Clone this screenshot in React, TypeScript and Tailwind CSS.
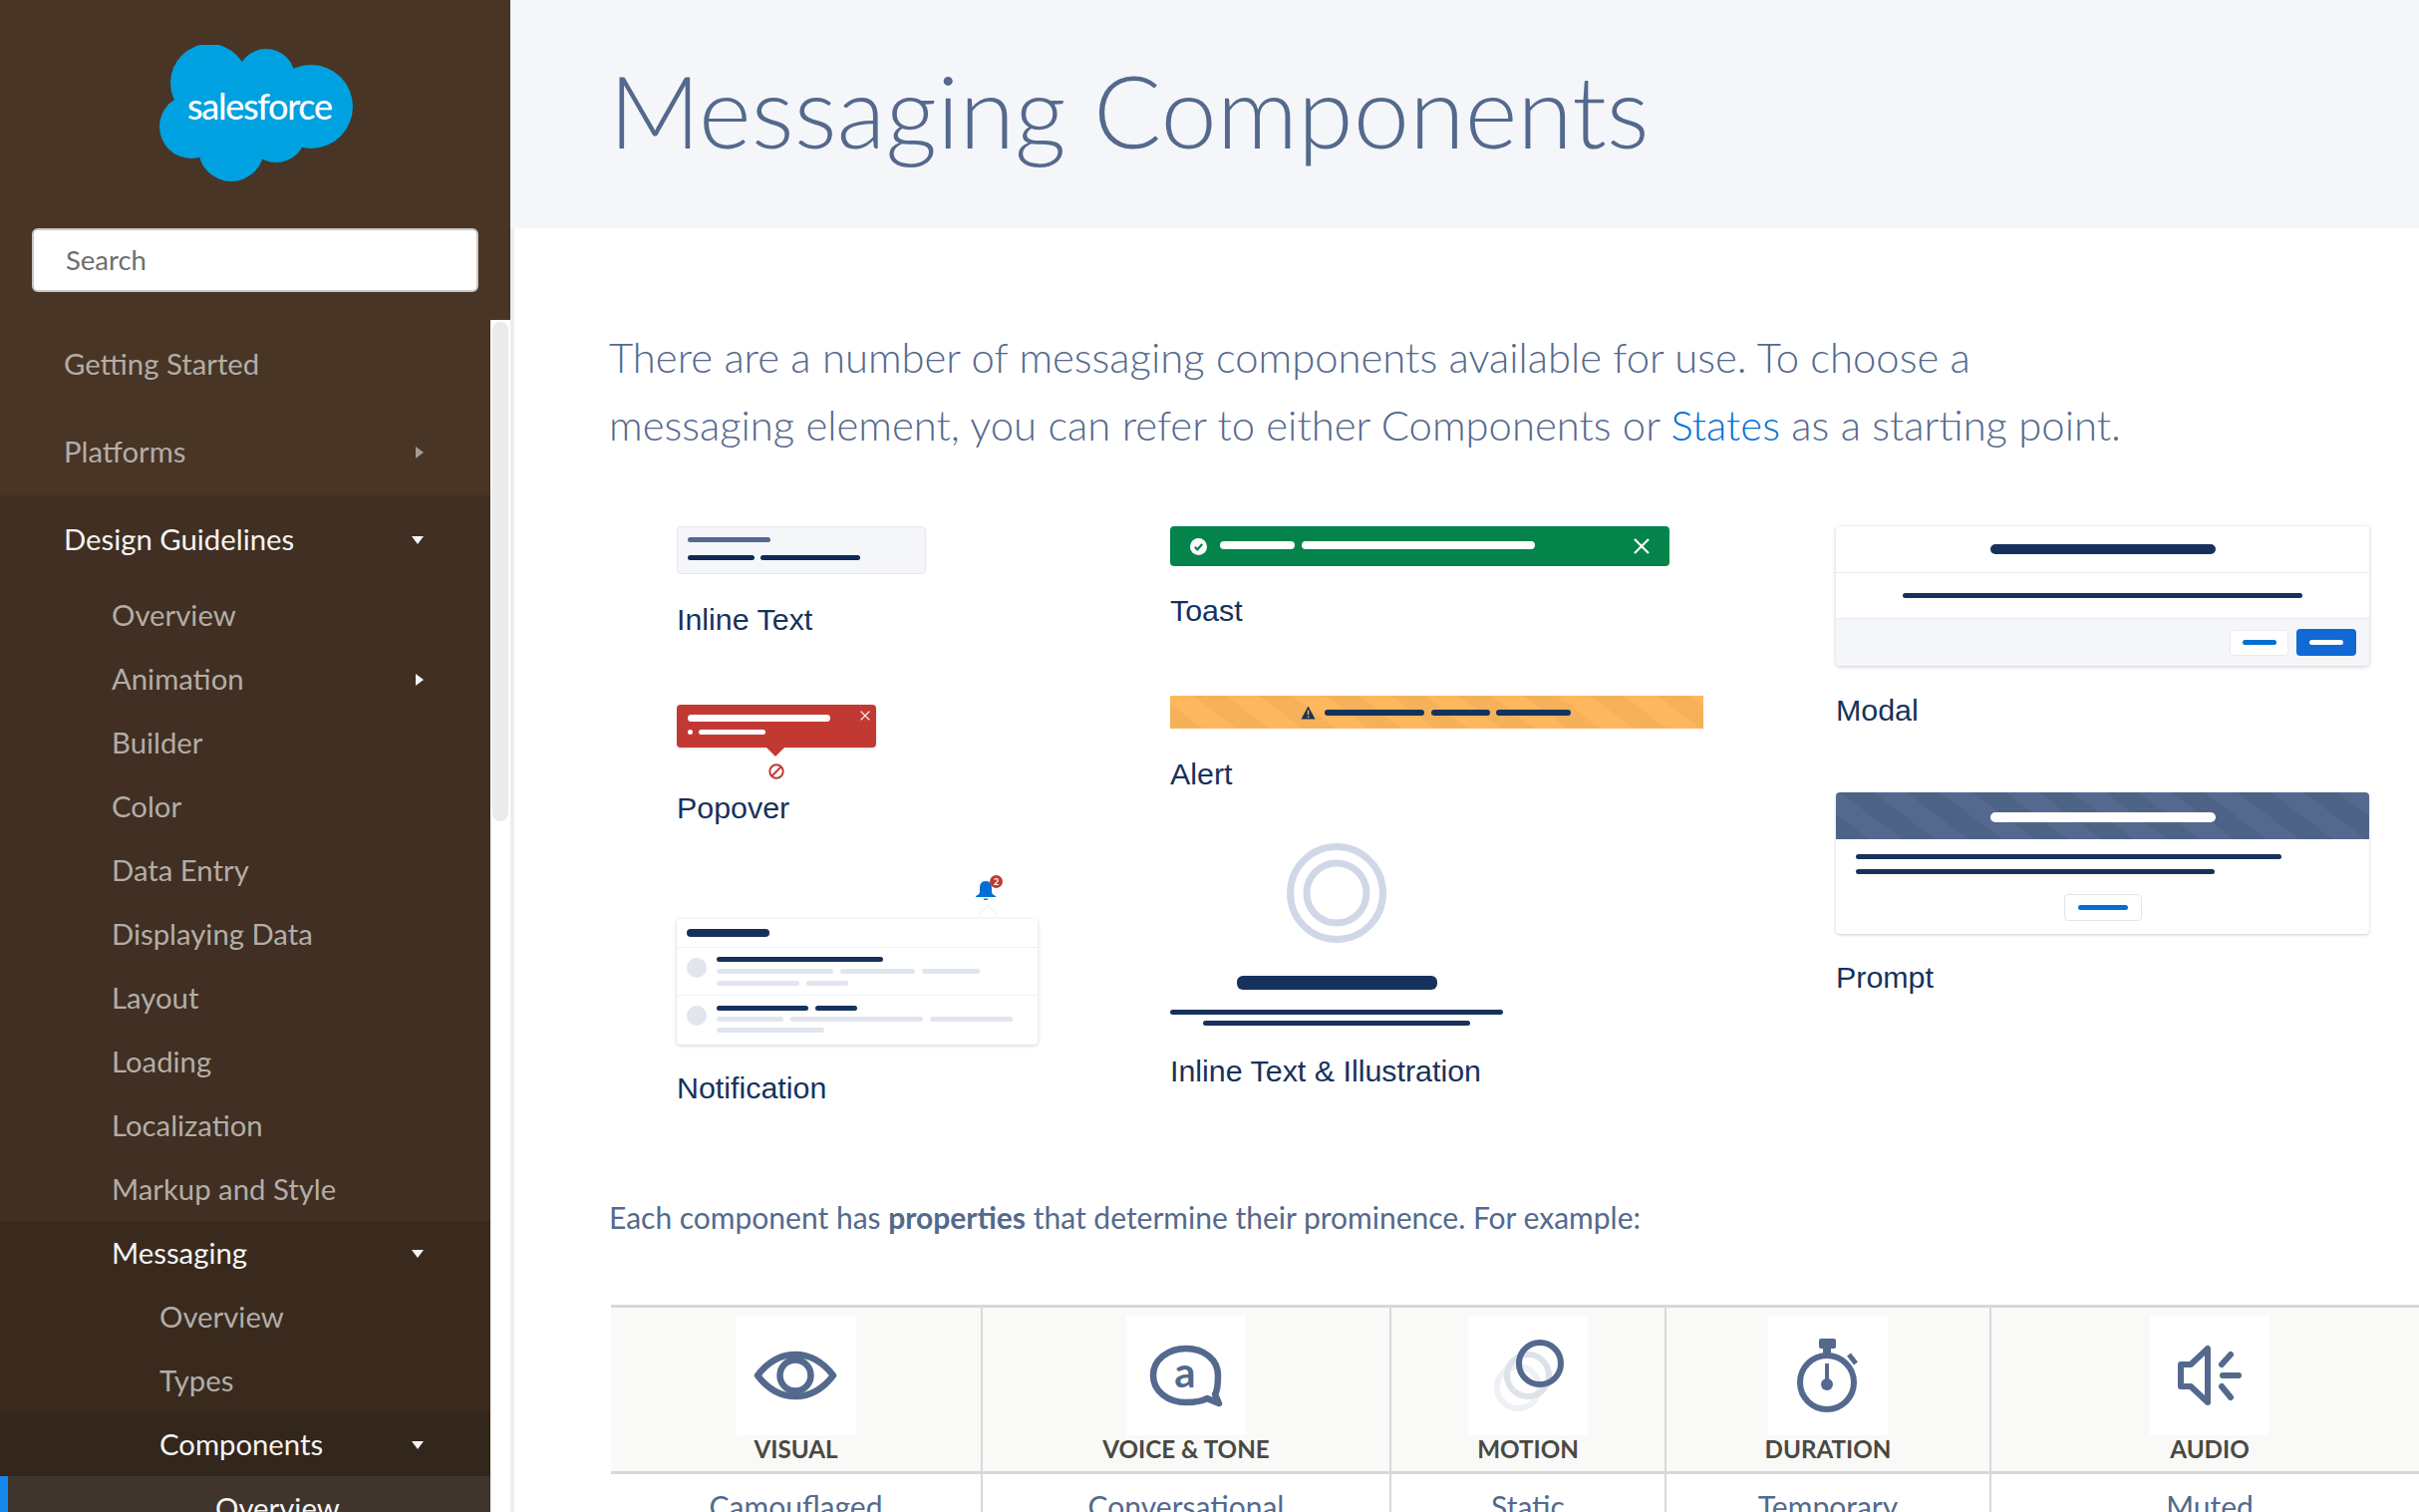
import React from "react";

const navTop = "text-[#b3ada7]";

const CaretRight = ({ className }: { className: string }) => (
  <svg width="8" height="12" viewBox="0 0 8 12" className={`mt-[3px] ${className}`}>
    <path d="M0 0 L8 6 L0 12 Z" fill="currentColor" />
  </svg>
);

const CaretDown = () => (
  <svg width="12" height="8" viewBox="0 0 12 8" className="mt-[3px] text-[#f4f4f4]">
    <path d="M0 0 H12 L6 8 Z" fill="currentColor" />
  </svg>
);

const NavRow = ({
  label,
  active,
  pad,
  tall,
  caret,
}: {
  label: string;
  active?: boolean;
  pad: string;
  tall?: boolean;
  caret?: "right" | "rightLight" | "down";
}) => (
  <div className={`flex items-center justify-between pr-[67px] pb-px ${pad} ${tall ? "h-[88px]" : "h-16"}`}>
    <span className={active ? "text-[#f4f4f4]" : navTop}>{label}</span>
    {caret === "right" && <CaretRight className="text-[#a09a94]" />}
    {caret === "rightLight" && <CaretRight className="text-[#f4f4f4]" />}
    {caret === "down" && <CaretDown />}
  </div>
);

const Logo = () => (
  <svg width="200" height="140" viewBox="0 0 200 140" className="block">
    <g fill="#00a1e0">
      <circle cx="50" cy="38" r="39" />
      <circle cx="107" cy="33" r="29" />
      <circle cx="152" cy="62" r="42" />
      <circle cx="32" cy="82" r="32" />
      <circle cx="72" cy="104" r="33" />
      <circle cx="117" cy="88" r="30" />
      <rect x="40" y="30" width="100" height="70" />
    </g>
    <text x="28" y="75" fill="#ffffff" fontSize="36" fontFamily="Lato, sans-serif" fontWeight="500" textLength="146">
      salesforce
    </text>
  </svg>
);

const Sidebar = () => (
  <aside className="flex h-full w-[512px] shrink-0 flex-col bg-[#483526] font-[Lato,sans-serif] text-[29.3px]">
    <div className="h-[321px] shrink-0 px-8 pt-[45px]">
      <div className="ml-[128px] h-[136px]">
        <Logo />
      </div>
      <div className="mt-12 flex h-16 w-[448px] items-center rounded-md border-2 border-[#c9c7c5] bg-white pl-8 text-[27.5px] text-[#6e6e6e]">
        Search
      </div>
    </div>
    <div className="flex min-h-0 flex-1">
      <nav className="w-[492px] shrink-0">
        <NavRow label="Getting Started" pad="pl-16" tall />
        <NavRow label="Platforms" pad="pl-16" tall caret="right" />
        <div className="bg-[#402f22]">
          <NavRow label="Design Guidelines" pad="pl-16" tall active caret="down" />
          <NavRow label="Overview" pad="pl-28" />
          <NavRow label="Animation" pad="pl-28" caret="rightLight" />
          <NavRow label="Builder" pad="pl-28" />
          <NavRow label="Color" pad="pl-28" />
          <NavRow label="Data Entry" pad="pl-28" />
          <NavRow label="Displaying Data" pad="pl-28" />
          <NavRow label="Layout" pad="pl-28" />
          <NavRow label="Loading" pad="pl-28" />
          <NavRow label="Localization" pad="pl-28" />
          <NavRow label="Markup and Style" pad="pl-28" />
          <div className="bg-[#3a2a1e]">
            <NavRow label="Messaging" pad="pl-28" active caret="down" />
            <NavRow label="Overview" pad="pl-40" />
            <NavRow label="Types" pad="pl-40" />
            <div className="bg-[#33261b]">
              <NavRow label="Components" pad="pl-40" active caret="down" />
              <div className="flex h-16 items-center border-l-8 border-[#1589ee] bg-[#40352c] pl-[208px] text-[#f4f4f4]">
                Overview
              </div>
            </div>
          </div>
        </div>
      </nav>
      <div className="w-5 shrink-0 bg-white p-0.5">
        <div className="h-[501px] rounded-full bg-[#ebebeb]" />
      </div>
    </div>
  </aside>
);

const Label = ({ children, className }: { children: React.ReactNode; className: string }) => (
  <div className={`pb-[3px] font-['Liberation_Sans',sans-serif] text-[30.4px] leading-[33px] text-[#16325c] ${className}`}>{children}</div>
);

const X = ({ size, stroke }: { size: number; stroke: number }) => (
  <svg width={size} height={size} viewBox="0 0 16 16">
    <path d="M1 1 L15 15 M15 1 L1 15" stroke="#ffffff" strokeWidth={stroke} fill="none" />
  </svg>
);

const InlineText = () => (
  <div className="flex h-12 w-[250px] flex-col gap-[13px] rounded-sm border border-[#e5e8ef] bg-[#f4f6f9] pt-[10px] pl-[10px]">
    <div className="h-[5px] w-[83px] rounded-full bg-[#54698d]" />
    <div className="flex gap-1.5">
      <div className="h-[5px] w-[67px] rounded-full bg-[#0e2a55]" />
      <div className="h-[5px] w-[100px] rounded-full bg-[#0e2a55]" />
    </div>
  </div>
);

const Popover = () => (
  <div className="mt-[66px] w-[200px]">
    <div className="relative h-[43px] rounded-sm bg-[#c23934] pt-2.5 pl-[11px] shadow-sm">
      <div className="h-[7px] w-[143px] rounded-full bg-white" />
      <div className="mt-2 flex items-center gap-[6px]">
        <div className="h-[5px] w-[5px] rounded-full bg-white" />
        <div className="h-[5px] w-[67px] rounded-full bg-white" />
      </div>
      <div className="absolute top-1.5 right-[6px]">
        <X size={10} stroke={2} />
      </div>
      <div className="absolute top-[43px] left-[90px] h-0 w-0 border-x-[9px] border-t-[9px] border-x-transparent border-t-[#c23934]" />
    </div>
    <div className="mt-4 flex justify-center">
      <svg width="16" height="16" viewBox="0 0 16 16">
        <circle cx="8" cy="8" r="6.7" fill="none" stroke="#c23934" strokeWidth="2" />
        <path d="M3.5 12.5 L12.5 3.5" stroke="#c23934" strokeWidth="2" />
      </svg>
    </div>
  </div>
);

const Bell = () => (
  <svg width="22" height="22" viewBox="0 0 22 22">
    <path
      d="M11 1 C6.5 1 5 4.5 5 8 V12 C5 14 3 15 1 16 V17 H21 V16 C19 15 17 14 17 12 V8 C17 4.5 15.500 1 11 1 Z"
      fill="#0070d2"
    />
    <path d="M8.500 18.500 H13.500 C13 20.500 9 20.500 8.500 18.500 Z" fill="#0070d2" />
  </svg>
);

const Notification = () => (
  <div className="relative mt-[55px] w-[362px]">
    <div className="flex h-[37px] justify-end pr-[39px]">
      <div className="relative mr-[2px] -mt-[2px] h-[22px]">
        <Bell />
        <div className="absolute -top-[5px] -right-[6px] flex h-[13px] w-[13px] items-center justify-center rounded-full bg-[#c23934] font-[Lato,sans-serif] text-[9px] font-bold leading-none text-white">
          2
        </div>
      </div>
    </div>
    <div className="absolute top-[27px] right-[43px] h-[14px] w-[14px] rotate-45 bg-white shadow-[-1px_-1px_1px_rgba(0,0,0,0.06)]" />
    <div className="relative overflow-hidden rounded bg-white shadow-[0_1px_4px_rgba(0,0,0,0.18)]">
      <div className="h-[29px] border-b border-[#eef0f5] pt-2.5 pl-2.5">
        <div className="h-2 w-[83px] rounded-full bg-[#16325c]" />
      </div>
      <div className="flex h-[48px] gap-2.5 border-b border-[#eef0f5] pt-[9px] pl-2.5">
        <div className="mt-[1px] h-5 w-5 rounded-full bg-[#e0e5ee]" />
        <div className="flex flex-col gap-[7px]">
          <div className="h-[5px] w-[167px] rounded-full bg-[#16325c]" />
          <div className="flex gap-[7px]">
            <div className="h-[5px] w-[117px] rounded-full bg-[#e0e5ee]" />
            <div className="h-[5px] w-[75px] rounded-full bg-[#e0e5ee]" />
            <div className="h-[5px] w-[58px] rounded-full bg-[#e0e5ee]" />
          </div>
          <div className="flex gap-[7px]">
            <div className="h-[5px] w-[83px] rounded-full bg-[#e0e5ee]" />
            <div className="h-[5px] w-[42px] rounded-full bg-[#e0e5ee]" />
          </div>
        </div>
      </div>
      <div className="flex h-[49px] gap-2.5 pt-[10px] pl-2.5">
        <div className="h-5 w-5 rounded-full bg-[#e0e5ee]" />
        <div className="flex flex-col gap-[6px]">
          <div className="flex gap-[7px]">
            <div className="h-[5px] w-[92px] rounded-full bg-[#16325c]" />
            <div className="h-[5px] w-[42px] rounded-full bg-[#16325c]" />
          </div>
          <div className="flex gap-[7px]">
            <div className="h-[5px] w-[67px] rounded-full bg-[#e0e5ee]" />
            <div className="h-[5px] w-[133px] rounded-full bg-[#e0e5ee]" />
            <div className="h-[5px] w-[83px] rounded-full bg-[#e0e5ee]" />
          </div>
          <div className="h-[5px] w-[108px] rounded-full bg-[#e0e5ee]" />
        </div>
      </div>
    </div>
  </div>
);

const Toast = () => (
  <div className="flex h-10 w-[501px] items-center rounded-sm bg-[#04844b] pl-[20px]">
    <svg width="17" height="17" viewBox="0 0 17 17">
      <circle cx="8.500" cy="8.500" r="8.500" fill="#ffffff" />
      <path d="M4.800 8.800 L7.300 11.300 L12.200 6" fill="none" stroke="#04844b" strokeWidth="2.200" />
    </svg>
    <div className="ml-[13px] mb-[2px] h-2 w-[75px] rounded-full bg-white" />
    <div className="ml-[7px] mb-[2px] h-2 w-[234px] rounded-full bg-white" />
    <div className="ml-[99px]">
      <X size={16} stroke={2.2} />
    </div>
  </div>
);

const Alert = () => (
  <div className="mt-[66px] flex h-[33px] w-[535px] items-center bg-[#ffb75d] bg-[repeating-linear-gradient(37deg,rgba(120,90,60,0.07)_0_20px,transparent_20px_40px)] pl-[131px]">
    <svg width="15" height="14" viewBox="0 0 15 14">
      <path d="M7.500 0.500 L14.500 13.500 H0.500 Z" fill="#16325c" />
      <path d="M7.500 4.500 V9 M7.500 10.300 V11.800" stroke="#ffb75d" strokeWidth="1.500" />
    </svg>
    <div className="ml-[9px] h-[6px] w-[100px] rounded-full bg-[#16325c]" />
    <div className="ml-[7px] h-[6px] w-[59px] rounded-full bg-[#16325c]" />
    <div className="ml-[6px] h-[6px] w-[75px] rounded-full bg-[#16325c]" />
  </div>
);

const Illustration = () => (
  <div className="mt-[50px] flex w-[334px] flex-col items-center">
    <svg width="100" height="100" viewBox="0 0 100 100">
      <circle cx="50" cy="50" r="46.500" fill="none" stroke="#d0d8e7" strokeWidth="7" />
      <circle cx="50" cy="50" r="30" fill="none" stroke="#d0d8e7" strokeWidth="7" />
    </svg>
    <div className="mt-[33px] h-[14px] w-[201px] rounded-md bg-[#16325c]" />
    <div className="mt-5 h-[5px] w-[334px] rounded-full bg-[#16325c]" />
    <div className="mt-[6px] h-[5px] w-[268px] rounded-full bg-[#16325c]" />
  </div>
);

const Modal = () => (
  <div className="w-[535px] overflow-hidden rounded-sm bg-white shadow-[0_1px_4px_rgba(0,0,0,0.2)]">
    <div className="flex h-[47px] items-center justify-center border-b border-[#e8ebf1]">
      <div className="h-2.5 w-[226px] rounded-full bg-[#16325c]" />
    </div>
    <div className="flex h-[46px] items-center justify-center border-b border-[#e8ebf1]">
      <div className="h-[5px] w-[401px] rounded-full bg-[#16325c]" />
    </div>
    <div className="flex h-[47px] items-center justify-end gap-2 bg-[#f4f6f9] pr-[13px]">
      <div className="flex h-[26px] w-[59px] items-center justify-center rounded-sm border border-[#e8ebf1] bg-white">
        <div className="h-[5px] w-[34px] rounded-full bg-[#0070d2]" />
      </div>
      <div className="flex h-[27px] w-[60px] items-center justify-center rounded-sm bg-[#1269d3]">
        <div className="h-[5px] w-[34px] rounded-full bg-white" />
      </div>
    </div>
  </div>
);

const Prompt = () => (
  <div className="mt-[63px] w-[535px] overflow-hidden rounded-sm bg-white shadow-[0_1px_3px_rgba(0,0,0,0.2)]">
    <div className="flex h-[47px] items-center justify-center bg-[#54698d] bg-[repeating-linear-gradient(37deg,rgba(40,70,100,0.16)_0_20px,transparent_20px_40px)] pt-[3px]">
      <div className="h-2.5 w-[226px] rounded-full bg-white" />
    </div>
    <div className="px-5 pt-[15px]">
      <div className="h-[5px] w-[427px] rounded-full bg-[#16325c]" />
      <div className="mt-2.5 h-[5px] w-[360px] rounded-full bg-[#16325c]" />
    </div>
    <div className="mt-5 flex justify-center pb-[13px]">
      <div className="flex h-[27px] w-[78px] items-center justify-center rounded-sm border border-[#e0e5ee]">
        <div className="h-[5px] w-[50px] rounded-full bg-[#0070d2]" />
      </div>
    </div>
  </div>
);

const c = "#54698d";

const EyeIcon = () => (
  <svg width="120" height="120" viewBox="0 0 120 120" fill="none" stroke={c} strokeWidth="6.500">
    <path d="M21 60 C31 47 44 39 59 39 C74 39 87 47 97 60 C87 73 74 81 59 81 C44 81 31 73 21 60 Z" strokeLinejoin="round" />
    <circle cx="59" cy="60" r="15.500" />
  </svg>
);

const BubbleIcon = () => (
  <svg width="120" height="120" viewBox="0 0 120 120" fill="none" stroke={c} strokeWidth="6.500">
    <path
      d="M60 33 C78 33 92 44 92 60 C92 68 91 76 89 79 L93 88 L81 83 C76 86 69 87 60 87 C42 87 27 76 27 60 C27 44 42 33 60 33 Z"
      strokeLinejoin="round"
    />
    <text x="59" y="72" fill={c} stroke="none" fontFamily="Lato, sans-serif" fontSize="42" fontWeight="700" textAnchor="middle">
      a
    </text>
  </svg>
);

const MotionIcon = () => (
  <svg width="120" height="120" viewBox="0 0 120 120" fill="none" strokeWidth="6">
    <circle cx="50" cy="72" r="21" stroke="#eef0f5" />
    <circle cx="60" cy="60" r="21" stroke="#dde1ea" />
    <circle cx="72" cy="48" r="21" stroke={c} />
  </svg>
);

const TimerIcon = () => (
  <svg width="120" height="120" viewBox="0 0 120 120" fill="none" stroke={c} strokeWidth="6">
    <circle cx="59" cy="67" r="27" />
    <rect x="51" y="23" width="17" height="10" rx="2" fill={c} stroke="none" />
    <rect x="55" y="32" width="8" height="7" fill={c} stroke="none" />
    <path d="M59 48 V68" strokeWidth="4" />
    <ellipse cx="59" cy="69" rx="6" ry="6" fill={c} stroke="none" />
    <path d="M81 39 L88 48" strokeWidth="5" />
  </svg>
);

const AudioIcon = () => (
  <svg width="120" height="120" viewBox="0 0 120 120" fill="none" stroke={c} strokeWidth="6" strokeLinecap="round" strokeLinejoin="round">
    <path d="M31 49 H41 L58 33 V87 L41 71 H31 Z" />
    <path d="M81 39 L72 49 M73 60 H89 M72 71 L81 82" />
  </svg>
);

const columns = [
  { title: "VISUAL", icon: <EyeIcon />, value: "Camouflaged", border: true },
  { title: "VOICE & TONE", icon: <BubbleIcon />, value: "Conversational", border: true },
  { title: "MOTION", icon: <MotionIcon />, value: "Static", border: true },
  { title: "DURATION", icon: <TimerIcon />, value: "Temporary", border: true },
  { title: "AUDIO", icon: <AudioIcon />, value: "Muted", border: false },
];

const PropertiesTable = () => (
  <div className="mt-[63px] ml-0.5 grid w-[1823px] grid-cols-[373px_410px_276px_326px_438px] font-[Lato,sans-serif]">
    {columns.map((col) => (
      <div
        key={col.title}
        className={`flex h-[170px] flex-col items-center border-y-[3px] border-[#d8d8d8] bg-[#f9f9f7] pt-2 ${col.border ? "border-r-2" : ""}`}
      >
        <div className="h-[120px] w-[120px] bg-white">{col.icon}</div>
        <div className="text-[24.2px] font-bold leading-[28px] text-[#4a4842]">{col.title}</div>
      </div>
    ))}
    {columns.map((col) => (
      <div
        key={col.value}
        className={`flex h-20 justify-center border-[#d8d8d8] pt-[10px] text-[30px] text-[#54698d] ${col.border ? "border-r-2" : ""}`}
      >
        {col.value}
      </div>
    ))}
  </div>
);

export default function App() {
  return (
    <div className="flex h-screen w-screen overflow-hidden bg-white">
      <Sidebar />
      <main className="min-w-0 flex-1">
        <header className="flex h-[229px] items-center bg-[#f4f6f9] pb-2 pl-[99px]">
          <h1 className="font-[Lato,sans-serif] text-[101px] font-light leading-none text-[#54698d]">Messaging Components</h1>
        </header>
        <div className="h-[1288px] overflow-hidden border-l-4 border-[#eceef5] pt-[95px] pl-[95px]">
          <p className="w-[1700px] font-[Lato,sans-serif] text-[41.8px] font-light leading-[68px] text-[#54698d]">
            There are a number of messaging components available for use. To choose a
            <br />
            messaging element, you can refer to either Components or <span className="text-[#0070d2]">States</span> as a starting point.
          </p>
          <div className="mt-[68px] flex pl-[68px]">
            <div className="w-[495px]">
              <InlineText />
              <Label className="mt-[29px]">Inline Text</Label>
              <Popover />
              <Label className="mt-3">Popover</Label>
              <Notification />
              <Label className="mt-[27px]">Notification</Label>
            </div>
            <div className="w-[668px]">
              <Toast />
              <Label className="mt-7">Toast</Label>
              <Alert />
              <Label className="mt-[29px]">Alert</Label>
              <Illustration />
              <Label className="mt-[29px]">Inline Text &amp; Illustration</Label>
            </div>
            <div className="w-[535px]">
              <Modal />
              <Label className="mt-7">Modal</Label>
              <Prompt />
              <Label className="mt-[27px]">Prompt</Label>
            </div>
          </div>
          <p className="mt-[85px] font-[Lato,sans-serif] text-[30px] leading-[50px] text-[#54698d]">
            Each component has <strong className="font-bold">properties</strong> that determine their prominence. For example:
          </p>
          <PropertiesTable />
        </div>
      </main>
    </div>
  );
}
